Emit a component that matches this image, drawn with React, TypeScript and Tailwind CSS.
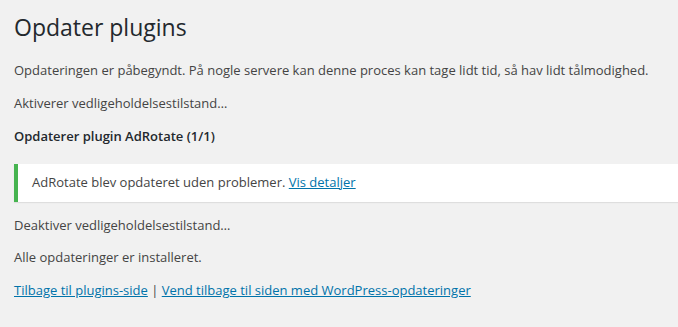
export default function App() {
    return (
        <div className="min-h-screen bg-[#f1f1f1] text-[#444] font-['Open_Sans',sans-serif] text-[13px] leading-[19.5px] overflow-hidden">
            <div className="pl-[14px] pt-[12px]">
                {/* Page title */}
                <h1 className="text-[23px] leading-[30px] font-normal text-[#23282d]">Opdater plugins</h1>

                <p className="mt-[19px]">
                    Opdateringen er påbegyndt. På nogle servere kan denne proces kan tage lidt tid, så hav lidt tålmodighed.
                </p>
                <p className="mt-[13px]">Aktiverer vedligeholdelsestilstand…</p>

                <h2 className="mt-[14px] font-semibold text-[#23282d]">Opdaterer plugin AdRotate (1/1)</h2>

                {/* Success notice */}
                <div className="mt-[17px] bg-white border-l-4 border-[#46b450] shadow-[0_1px_1px_rgba(0,0,0,0.08)] px-[14px] pt-[9px] pb-[10px]">
                    <p>
                        AdRotate blev opdateret uden problemer.{' '}
                        <a href="#" className="text-[#0073aa] underline">Vis detaljer</a>
                    </p>
                </div>

                <p className="mt-[14px]">Deaktiver vedligeholdelsestilstand…</p>
                <p className="mt-[12px]">Alle opdateringer er installeret.</p>

                <p className="mt-[14px]">
                    <a href="#" className="text-[#0073aa] underline">Tilbage til plugins-side</a>
                    {' | '}
                    <a href="#" className="text-[#0073aa] underline">Vend tilbage til siden med WordPress-opdateringer</a>
                </p>
            </div>
        </div>
    );
}
